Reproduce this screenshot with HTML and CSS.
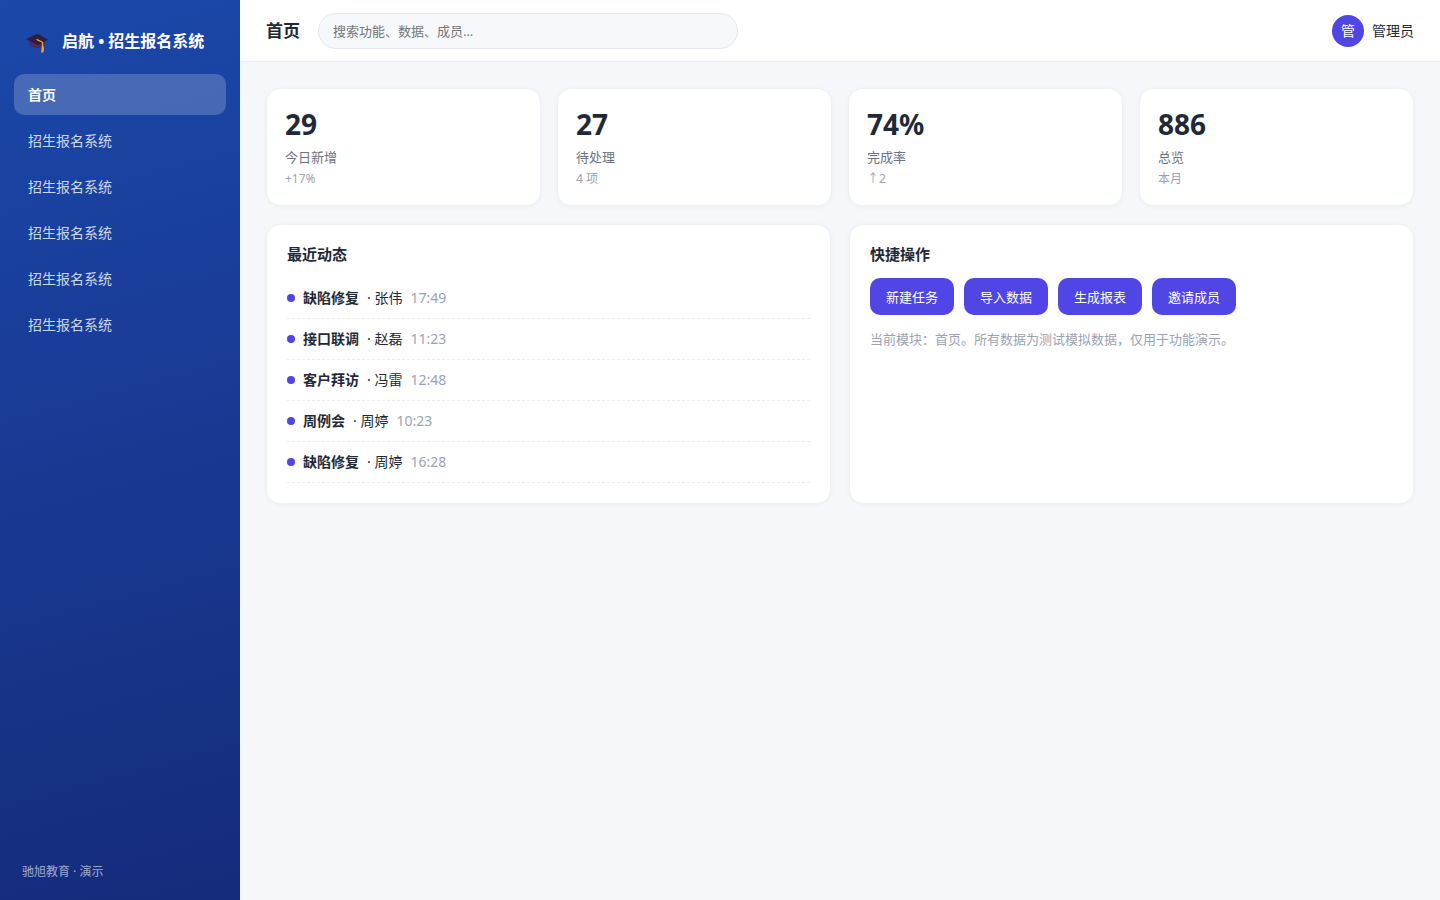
FILE: index.html
```html
<!DOCTYPE html>
<html lang="zh-CN">
<head>
    <meta charset="UTF-8">
    <meta name="viewport" content="width=device-width, initial-scale=1.0">
    <title>启航 • 招生报名系统</title>
    <link rel="stylesheet" href="styles.css">
</head>
<body>
    <div class="app">
        <!-- Sidebar -->
        <aside class="sidebar">
            <div class="brand">
                <svg class="brand-icon" viewBox="0 0 24 24" aria-hidden="true">
                    <path d="M3 11.5 L3.5 16 Q5 18.5 10 19 Q15 19 17 17.5 L17.5 11.5 Z" fill="#4b2c61"/>
                    <path d="M0.3 10.3 L10.5 5 Q11.5 4.8 12.5 5.3 L22 10.8 L13.5 15.6 Q12 16 10.8 15.5 Z" fill="#321b41"/>
                    <path d="M10.5 10.4 L16.5 13.2 V18" fill="none" stroke="#fba828" stroke-width="1.2" stroke-linejoin="round"/>
                    <path d="M15.8 17 H17.4 L18 20 L17.5 23 L15.2 24 Z" fill="#fba828"/>
                </svg>
                <span>启航 • 招生报名系统</span>
            </div>
            <nav class="nav">
                <a href="#" class="nav-item active">首页</a>
                <a href="#" class="nav-item">招生报名系统</a>
                <a href="#" class="nav-item">招生报名系统</a>
                <a href="#" class="nav-item">招生报名系统</a>
                <a href="#" class="nav-item">招生报名系统</a>
                <a href="#" class="nav-item">招生报名系统</a>
            </nav>
            <div class="sidebar-footer">驰旭教育 · 演示</div>
        </aside>

        <div class="main">
            <!-- Top bar -->
            <header class="topbar">
                <h1>首页</h1>
                <input type="search" class="search" placeholder="搜索功能、数据、成员…" aria-label="搜索">
                <div class="user">
                    <span class="avatar">管</span>
                    <span>管理员</span>
                </div>
            </header>

            <main class="content">
                <!-- Stats -->
                <section class="stats">
                    <div class="card stat">
                        <div class="stat-value">29</div>
                        <div class="stat-label">今日新增</div>
                        <div class="stat-note">+17%</div>
                    </div>
                    <div class="card stat">
                        <div class="stat-value">27</div>
                        <div class="stat-label">待处理</div>
                        <div class="stat-note">4 项</div>
                    </div>
                    <div class="card stat">
                        <div class="stat-value">74%</div>
                        <div class="stat-label">完成率</div>
                        <div class="stat-note">↑2</div>
                    </div>
                    <div class="card stat">
                        <div class="stat-value">886</div>
                        <div class="stat-label">总览</div>
                        <div class="stat-note">本月</div>
                    </div>
                </section>

                <!-- Panels -->
                <div class="panels">
                    <section class="card panel">
                        <h2>最近动态</h2>
                        <ul class="feed">
                            <li><i class="dot"></i><strong>缺陷修复</strong><span>· 张伟</span><time>17:49</time></li>
                            <li><i class="dot"></i><strong>接口联调</strong><span>· 赵磊</span><time>11:23</time></li>
                            <li><i class="dot"></i><strong>客户拜访</strong><span>· 冯雷</span><time>12:48</time></li>
                            <li><i class="dot"></i><strong>周例会</strong><span>· 周婷</span><time>10:23</time></li>
                            <li><i class="dot"></i><strong>缺陷修复</strong><span>· 周婷</span><time>16:28</time></li>
                        </ul>
                    </section>

                    <section class="card panel">
                        <h2>快捷操作</h2>
                        <div class="actions">
                            <button type="button" class="btn">新建任务</button>
                            <button type="button" class="btn">导入数据</button>
                            <button type="button" class="btn">生成报表</button>
                            <button type="button" class="btn">邀请成员</button>
                        </div>
                        <p class="hint">当前模块：首页。所有数据为测试模拟数据，仅用于功能演示。</p>
                    </section>
                </div>
            </main>
        </div>
    </div>
</body>
</html>
```

FILE: styles.css
```css
* {
    margin: 0;
    padding: 0;
    box-sizing: border-box;
}

body {
    font-family: "Noto Sans", "Noto Sans CJK SC", sans-serif;
    font-size: 14px;
    line-height: 20px;
    color: #1f2937;
    background: #f5f7fb;
}

.app {
    display: flex;
    min-height: 100vh;
}

/* Sidebar */
.sidebar {
    width: 240px;
    flex-shrink: 0;
    display: flex;
    flex-direction: column;
    padding: 18px 14px;
    color: #fff;
    background: linear-gradient(165deg, #1b48aa 0%, #152b7b 100%);
}

.brand {
    display: flex;
    align-items: center;
    gap: 12px;
    padding: 10px 12px 20px;
    font-size: 16px;
    font-weight: 700;
    line-height: 26px;
    white-space: nowrap;
}

.brand-icon {
    width: 24px;
    height: 24px;
    flex-shrink: 0;
}

.nav {
    display: flex;
    flex-direction: column;
    gap: 5px;
}

.nav-item {
    padding: 10px 14px;
    border-radius: 10px;
    line-height: 21px;
    color: rgba(255, 255, 255, 0.8);
    text-decoration: none;
}

.nav-item:hover {
    background: rgba(255, 255, 255, 0.1);
}

.nav-item.active {
    color: #fff;
    font-weight: 700;
    background: rgba(255, 255, 255, 0.2);
}

.sidebar-footer {
    margin-top: auto;
    padding: 0 8px;
    font-size: 12px;
    color: rgba(255, 255, 255, 0.6);
}

/* Top bar */
.main {
    flex: 1;
    min-width: 0;
}

.topbar {
    display: flex;
    align-items: center;
    gap: 18px;
    padding: 13px 26px 12px;
    background: #fff;
    border-bottom: 1px solid #eceef3;
}

.topbar h1 {
    font-size: 17px;
    line-height: 24px;
}

.search {
    width: 420px;
    height: 36px;
    padding: 0 14px;
    border: 1px solid #e3e6ef;
    border-radius: 18px;
    font: inherit;
    font-size: 13px;
    color: inherit;
    background: #f7f8fc;
    outline: none;
    appearance: none;
}

.search::placeholder {
    color: #757575;
}

.user {
    display: flex;
    align-items: center;
    gap: 8px;
    margin-left: auto;
}

.avatar {
    width: 32px;
    height: 32px;
    border-radius: 50%;
    line-height: 32px;
    text-align: center;
    color: #fff;
    background: #4f46e5;
}

/* Content */
.content {
    padding: 26px;
}

.card {
    background: #fff;
    border: 1px solid #eef0f5;
    border-radius: 14px;
    box-shadow: 0 1px 4px rgba(20, 30, 60, 0.04);
}

.stats {
    display: grid;
    grid-template-columns: repeat(4, 1fr);
    gap: 16px;
    margin-bottom: 18px;
}

.stat {
    padding: 18px 18px 17px;
}

.stat-value {
    font-size: 28px;
    font-weight: 700;
    line-height: 34px;
    margin-bottom: 6px;
}

.stat-label {
    font-size: 13px;
    color: #6b7280;
    margin-bottom: 3px;
}

.stat-note {
    font-size: 12px;
    line-height: 18px;
    color: #9aa3b2;
}

.panels {
    display: grid;
    grid-template-columns: 1fr 1fr;
    gap: 18px;
}

.panel {
    padding: 20px;
}

.panel h2 {
    font-size: 15px;
    line-height: 19px;
    margin-bottom: 14px;
}

.feed {
    list-style: none;
}

.feed li {
    display: flex;
    align-items: center;
    gap: 8px;
    padding: 10px 0;
    border-bottom: 1px dashed #eceef2;
}

.dot {
    width: 8px;
    height: 8px;
    border-radius: 50%;
    background: #4f46e5;
}

.feed time {
    color: #9aa3b2;
}

.actions {
    display: flex;
    flex-wrap: wrap;
    gap: 10px;
    margin-bottom: 14px;
}

.btn {
    height: 37px;
    padding: 0 16px;
    border: none;
    border-radius: 10px;
    font: inherit;
    font-size: 13px;
    color: #fff;
    background: #4f46e5;
    cursor: pointer;
}

.btn:hover {
    background: #4338ca;
}

.hint {
    font-size: 13px;
    color: #9aa3b2;
}
```
